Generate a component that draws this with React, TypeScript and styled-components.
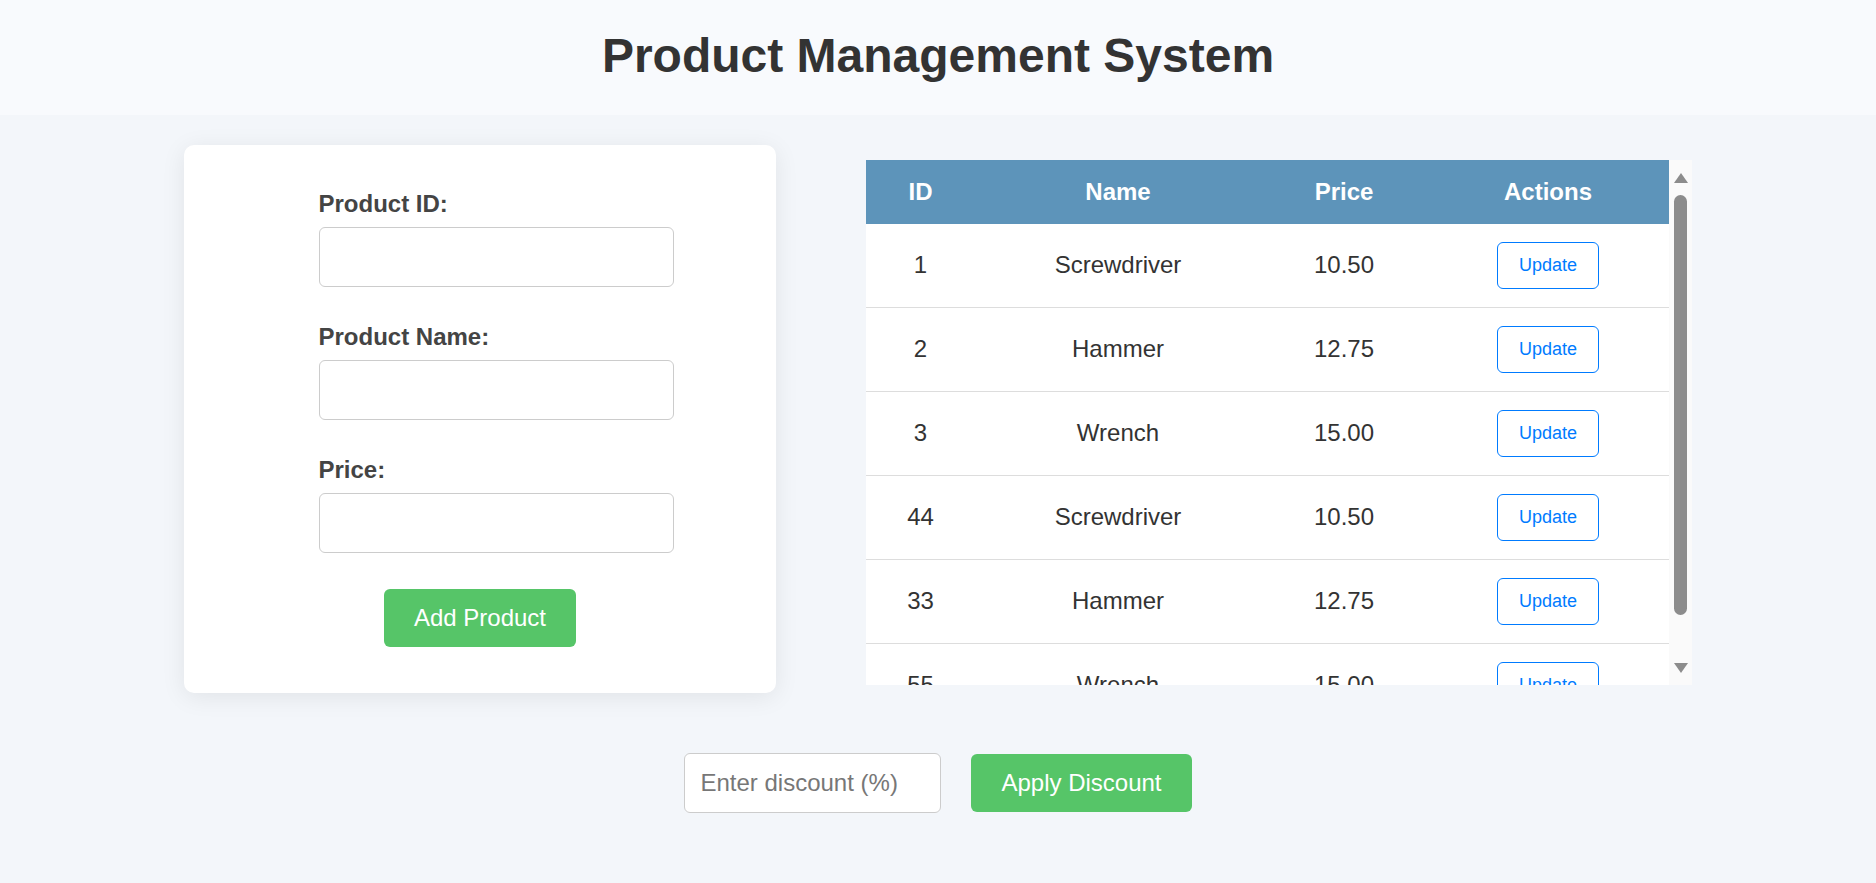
import React from "react";
import styled, { createGlobalStyle } from "styled-components";

const GlobalStyle = createGlobalStyle`
  html, body {
    margin: 0;
    padding: 0;
    background: #f3f6fa;
    font-family: "Liberation Sans", Arial, sans-serif;
    color: #333;
  }
  * { box-sizing: border-box; }
`;

const Page = styled.div`
  min-height: 100vh;
  display: flex;
  flex-direction: column;
`;

const Header = styled.header`
  background: #f8fafd;
  padding: 28px 0 32px;
  text-align: center;
`;

const Title = styled.h1`
  margin: 0;
  font-size: 48px;
  font-weight: bold;
  line-height: normal;
  color: #333;
`;

const Main = styled.main`
  display: flex;
  justify-content: center;
  align-items: flex-start;
  gap: 90px;
  margin-top: 30px;
`;

const Card = styled.form`
  width: 592px;
  background: #fff;
  border-radius: 10px;
  box-shadow: 0 4px 24px rgba(0, 0, 0, 0.08);
  padding: 45px 0 46px;
  display: flex;
  flex-direction: column;
  align-items: center;
`;

const Field = styled.div`
  width: 323px;
  margin-bottom: 36.5px;
`;

const Label = styled.label`
  display: block;
  font-size: 24px;
  font-weight: bold;
  line-height: 27.6px;
  color: #444;
  margin-bottom: 9px;
`;

const TextInput = styled.input<{ $w?: string }>`
  box-sizing: content-box;
  width: ${(p) => p.$w ?? "100%"};
  height: 28px;
  padding: 15px;
  font-size: 24px;
  line-height: 28px;
  font-family: "Liberation Sans", Arial, sans-serif;
  color: #333;
  border: 1px solid #ccc;
  border-radius: 6px;
  background: #fff;
  outline: none;
  display: block;
  &::placeholder {
    color: #777;
  }
`;

const GreenButton = styled.button`
  background: #56c568;
  color: #fff;
  border: none;
  border-radius: 6px;
  padding: 15px 30px;
  font-size: 24px;
  line-height: 27.6px;
  font-family: "Liberation Sans", Arial, sans-serif;
  cursor: pointer;
`;

const TableFrame = styled.div`
  margin-top: 15px;
  width: 826px;
  height: 525px;
  display: flex;
  background: #fff;
`;

const TableScroll = styled.div`
  flex: 1;
  overflow-y: auto;
  scrollbar-width: none;
  &::-webkit-scrollbar {
    display: none;
  }
`;

const ScrollBar = styled.div`
  width: 23px;
  display: flex;
  flex-direction: column;
  background: #fafafa;
`;

const ScrollArrow = styled.div`
  height: 35px;
  display: flex;
  align-items: center;
  justify-content: center;
`;

const ScrollTrack = styled.div`
  flex: 1;
  padding: 0 5px;
`;

const ScrollThumb = styled.div`
  height: 420px;
  border-radius: 6.5px;
  background: #8c8c8c;
`;

const Table = styled.table`
  width: 100%;
  border-collapse: collapse;
  table-layout: fixed;
`;

const HeadCell = styled.th`
  background: #5d94ba;
  color: #fff;
  font-size: 24px;
  font-weight: bold;
  line-height: 27.6px;
  padding: 18px 0;
  text-align: center;
`;

const Cell = styled.td`
  font-size: 24px;
  line-height: 27.6px;
  color: #333;
  padding: 18px 0;
  text-align: center;
  border-bottom: 1px solid #ddd;
`;

const UpdateButton = styled.button`
  background: #fff;
  color: #007bff;
  border: 1px solid #007bff;
  border-radius: 6px;
  padding: 12px 21px;
  font-size: 18px;
  line-height: 21px;
  font-family: "Liberation Sans", Arial, sans-serif;
  cursor: pointer;
  vertical-align: middle;
`;

const DiscountRow = styled.div`
  display: flex;
  justify-content: center;
  align-items: center;
  gap: 30px;
  margin-top: 60px;
`;

const products = [
  { id: 1, name: "Screwdriver", price: "10.50" },
  { id: 2, name: "Hammer", price: "12.75" },
  { id: 3, name: "Wrench", price: "15.00" },
  { id: 44, name: "Screwdriver", price: "10.50" },
  { id: 33, name: "Hammer", price: "12.75" },
  { id: 55, name: "Wrench", price: "15.00" },
];

const Triangle = ({ down }: { down?: boolean }) => (
  <svg width="14" height="10" viewBox="0 0 14 10">
    <polygon points={down ? "0,0 14,0 7,10" : "7,0 14,10 0,10"} fill="#8c8c8c" />
  </svg>
);

export default function App() {
  return (
    <Page>
      <GlobalStyle />
      <Header>
        <Title>Product Management System</Title>
      </Header>
      <Main>
        <Card onSubmit={(e) => e.preventDefault()}>
          <Field>
            <Label htmlFor="pid">Product ID:</Label>
            <TextInput id="pid" type="text" />
          </Field>
          <Field>
            <Label htmlFor="pname">Product Name:</Label>
            <TextInput id="pname" type="text" />
          </Field>
          <Field>
            <Label htmlFor="pprice">Price:</Label>
            <TextInput id="pprice" type="text" />
          </Field>
          <GreenButton type="submit">Add Product</GreenButton>
        </Card>
        <TableFrame>
          <TableScroll>
            <Table>
              <colgroup>
                <col style={{ width: 109 }} />
                <col style={{ width: 286 }} />
                <col style={{ width: 166 }} />
                <col style={{ width: 242 }} />
              </colgroup>
              <thead>
                <tr>
                  <HeadCell>ID</HeadCell>
                  <HeadCell>Name</HeadCell>
                  <HeadCell>Price</HeadCell>
                  <HeadCell>Actions</HeadCell>
                </tr>
              </thead>
              <tbody>
                {products.map((p) => (
                  <tr key={p.id}>
                    <Cell>{p.id}</Cell>
                    <Cell>{p.name}</Cell>
                    <Cell>{p.price}</Cell>
                    <Cell>
                      <UpdateButton type="button">Update</UpdateButton>
                    </Cell>
                  </tr>
                ))}
              </tbody>
            </Table>
          </TableScroll>
          <ScrollBar aria-hidden="true">
            <ScrollArrow>
              <Triangle />
            </ScrollArrow>
            <ScrollTrack>
              <ScrollThumb />
            </ScrollTrack>
            <ScrollArrow>
              <Triangle down />
            </ScrollArrow>
          </ScrollBar>
        </TableFrame>
      </Main>
      <DiscountRow>
        <TextInput $w="225px" type="text" placeholder="Enter discount (%)" />
        <GreenButton type="button">Apply Discount</GreenButton>
      </DiscountRow>
    </Page>
  );
}
